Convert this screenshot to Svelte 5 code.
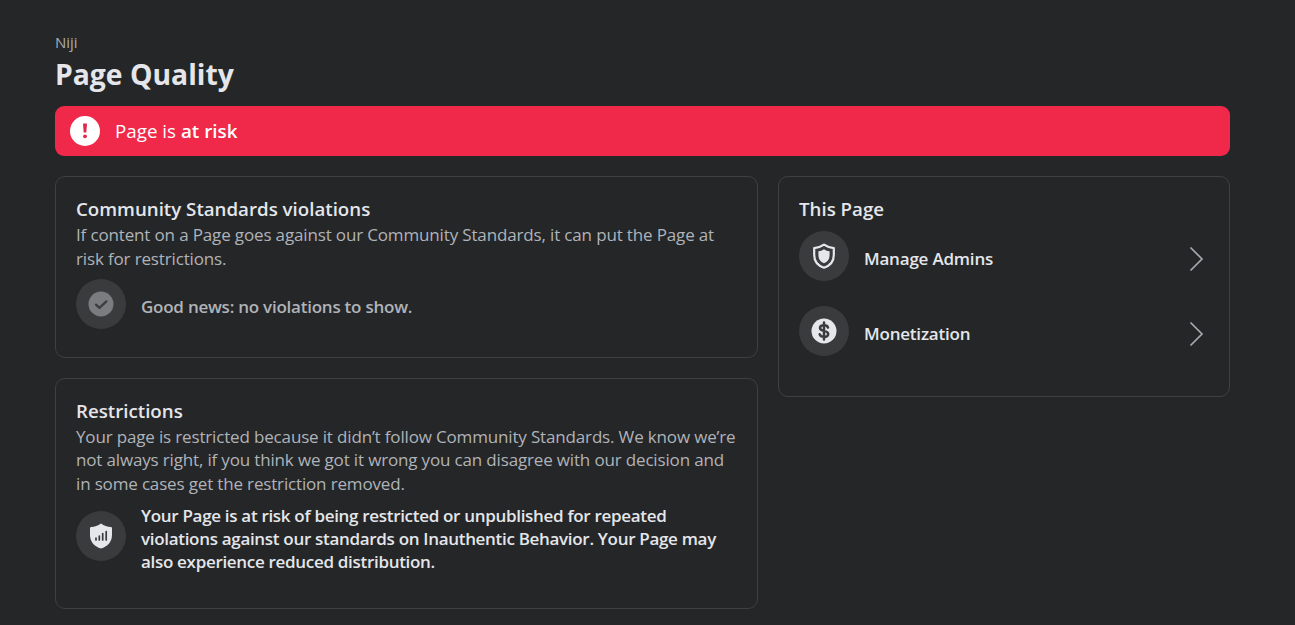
<script>
    const links = [
        { label: "Manage Admins", icon: "shield" },
        { label: "Monetization", icon: "dollar" },
    ];
</script>

<main>
    <header>
        <div class="owner">Niji</div>
        <h1>Page Quality</h1>
    </header>

    <div class="banner">
        <svg width="30" height="30" viewBox="0 0 30 30">
            <circle cx="15" cy="15" r="15" fill="#fff" />
            <path d="M13 7.4h4l-.7 9h-2.6z" fill="#e2284a" />
            <circle cx="15" cy="20.3" r="1.9" fill="#e2284a" />
        </svg>
        <span class="status">Page is <b>at risk</b></span>
    </div>

    <div class="columns">
        <div class="left">
            <section class="card violations">
                <h2>Community Standards violations</h2>
                <p class="desc">
                    If content on a Page goes against our Community Standards, it can put the Page at<br />
                    risk for restrictions.
                </p>
                <div class="row">
                    <span class="badge">
                        <svg width="26" height="26" viewBox="0 0 26 26">
                            <circle cx="13" cy="13" r="12.5" fill="#7b7c80" />
                            <path
                                d="M8 13.6l3.4 3.2 7-6.4"
                                fill="none"
                                stroke="#3c3d40"
                                stroke-width="2.3"
                                stroke-linecap="round"
                                stroke-linejoin="round"
                            />
                        </svg>
                    </span>
                    <span class="label muted">Good news: no violations to show.</span>
                </div>
            </section>

            <section class="card restrictions">
                <h2>Restrictions</h2>
                <p class="desc">
                    Your page is restricted because it didn’t follow Community Standards. We know we’re<br />
                    not always right, if you think we got it wrong you can disagree with our decision and<br />
                    in some cases get the restriction removed.
                </p>
                <div class="row">
                    <span class="badge">
                        <svg width="26" height="26" viewBox="0 0 26 26">
                            <path
                                d="M13 .4c3 2.3 6.4 3.3 9.8 3.6q1.2.1 1.2 1.3V12c0 7-4.5 11.5-11 13.5C6.5 23.5 2 19 2 12V5.3Q2 4.1 3.2 4C6.6 3.7 10 2.7 13 .4z"
                                fill="#e6e7ea"
                            />
                            <path
                                d="M8 17v-2M11.3 17v-4M14.7 17v-6.4M18.2 17V8.6"
                                fill="none"
                                stroke="#3a3b3d"
                                stroke-width="1.7"
                                stroke-linecap="round"
                            />
                        </svg>
                    </span>
                    <span class="label">
                        Your Page is at risk of being restricted or unpublished for repeated<br />
                        violations against our standards on Inauthentic Behavior. Your Page may<br />
                        also experience reduced distribution.
                    </span>
                </div>
            </section>
        </div>

        <section class="card page">
            <h2>This Page</h2>
            {#each links as link}
                <div class="row link">
                    <span class="badge">
                        {#if link.icon === "shield"}
                            <svg width="26" height="26" viewBox="0 0 26 26">
                                <path
                                    d="M13 1.7c3 2.2 6.3 3 9.8 3.5V12c0 6.6-3.8 10.7-9.8 12.7C7 22.7 3.2 18.6 3.2 12V5.2C6.7 4.7 10 3.9 13 1.7z"
                                    fill="none"
                                    stroke="#e6e7ea"
                                    stroke-width="2.2"
                                    stroke-linejoin="round"
                                />
                                <path
                                    d="M13 6.2c1.7 1.2 3.5 1.8 5.6 2.1v3.9c0 3.9-2 6.5-5.6 8-3.6-1.5-5.6-4.1-5.6-8V8.3c2.1-.3 3.9-.9 5.6-2.1z"
                                    fill="#e6e7ea"
                                />
                            </svg>
                        {:else}
                            <svg width="26" height="26" viewBox="0 0 26 26">
                                <circle cx="13" cy="13" r="12.5" fill="#e6e7ea" />
                                <path
                                    d="M13 4.5v17M17 9.6C16.6 8 15 7.3 13 7.3c-2.3 0-4 .9-4 2.7 0 4 8.2 1.8 8.2 5.9 0 1.9-1.8 2.9-4.2 2.9-2.2 0-3.9-.9-4.3-2.6"
                                    fill="none"
                                    stroke="#3a3b3d"
                                    stroke-width="2.5"
                                    stroke-linecap="round"
                                />
                            </svg>
                        {/if}
                    </span>
                    <span class="label">{link.label}</span>
                    <svg class="chevron" width="16" height="28" viewBox="0 0 16 28">
                        <path d="M1.5 2.5L13 14 1.5 25.5" fill="none" stroke="#a6a9ad" stroke-width="1.7" />
                    </svg>
                </div>
            {/each}
        </section>
    </div>
</main>

<style>
    :global(body) {
        background: #242628;
    }

    main {
        box-sizing: border-box;
        height: 625px;
        padding: 30px 65px 0 55px;
        overflow: hidden;
        background: #242628;
        color: #e4e6eb;
        font-family: "Open Sans", "Noto Sans", sans-serif;
        white-space: nowrap;
    }

    svg {
        display: block;
        flex: none;
    }

    header {
        height: 76px;
    }

    .owner {
        color: #a9acb0;
        font-size: 15px;
        line-height: 24px;
    }

    h1 {
        margin: 0;
        font-size: 28.3px;
        font-weight: 700;
        line-height: 40px;
    }

    .banner {
        display: flex;
        align-items: center;
        gap: 15px;
        box-sizing: border-box;
        height: 50px;
        padding-left: 15px;
        border-radius: 9px;
        background: #f0284a;
        color: #fff;
    }

    .status {
        font-size: 18.8px;
        line-height: 26px;
    }

    .status b {
        font-weight: 600;
    }

    .columns {
        display: grid;
        grid-template-columns: 703px 452px;
        gap: 20px;
        align-items: start;
        margin-top: 20px;
    }

    .left {
        display: grid;
        grid-template-columns: 703px;
        gap: 20px;
    }

    .card {
        box-sizing: border-box;
        padding: 19px 20px 0;
        border: 1px solid #3e4042;
        border-radius: 10px;
    }

    .violations {
        height: 182px;
    }

    .restrictions {
        height: 231px;
    }

    .page {
        height: 221px;
    }

    h2 {
        margin: 0;
        font-size: 18.7px;
        font-weight: 600;
        line-height: 26px;
    }

    .desc {
        margin: 0;
        padding-top: 1px;
        color: #b0b3b8;
        font-size: 17px;
        letter-spacing: -0.15px;
        line-height: 23.5px;
    }

    .restrictions .desc {
        letter-spacing: -0.16px;
        line-height: 23.4px;
    }

    .row {
        display: flex;
        align-items: center;
        gap: 15px;
    }

    .violations .row {
        margin-top: 9px;
    }

    .restrictions .row {
        align-items: flex-start;
        margin-top: 8.3px;
    }

    .restrictions .badge {
        margin-top: 7px;
    }

    .link {
        height: 50px;
        margin: 9px 4px 25px 0;
    }

    .badge {
        display: flex;
        flex: none;
        align-items: center;
        justify-content: center;
        width: 50px;
        height: 50px;
        border-radius: 50%;
        background: #3a3b3d;
    }

    .label {
        font-size: 17px;
        font-weight: 600;
        letter-spacing: -0.31px;
        line-height: 23px;
    }

    .muted {
        padding-top: 4px;
        color: #b0b3b8;
        letter-spacing: -0.24px;
    }

    .link .label {
        padding-top: 4px;
        letter-spacing: -0.2px;
    }

    .link + .link {
        margin-top: 0;
    }

    .chevron {
        margin-top: 6px;
        margin-left: auto;
    }
</style>
